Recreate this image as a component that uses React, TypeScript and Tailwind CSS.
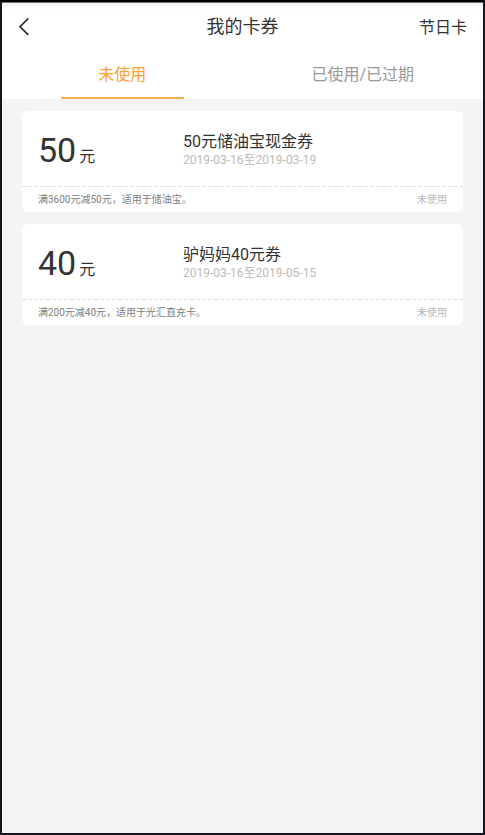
import * as React from 'react';
import { useState } from 'react';
import { clsx } from 'clsx';

interface Coupon {
  id: number;
  amount: number;
  title: string;
  period: string;
  rule: string;
  used: boolean;
}

const coupons: Coupon[] = [
  {
    id: 1,
    amount: 50,
    title: '50元储油宝现金券',
    period: '2019-03-16至2019-03-19',
    rule: '满3600元减50元，适用于储油宝。',
    used: false,
  },
  {
    id: 2,
    amount: 40,
    title: '驴妈妈40元券',
    period: '2019-03-16至2019-05-15',
    rule: '满200元减40元，适用于光汇直充卡。',
    used: false,
  },
];

interface TabButtonProps {
  label: string;
  active: boolean;
  onClick: () => void;
}

const TabButton = ({ label, active, onClick }: TabButtonProps) => (
  <button
    type="button"
    role="tab"
    aria-selected={active}
    onClick={onClick}
    className={clsx('flex flex-1 flex-col items-center', active ? 'text-[#fca130]' : 'text-[#999999]')}
  >
    <span className="flex flex-1 items-center pt-0.5 text-base">{label}</span>
    <span className={clsx('h-0.5 w-[51%]', active && 'bg-[#fcac4c]')} />
  </button>
);

const CouponCard = ({ coupon }: { coupon: Coupon }) => (
  <li className="rounded-md bg-white">
    <div className="flex h-[75px] items-center pt-0.5 pl-4">
      <div className="flex w-[145px] items-baseline gap-[3px] text-[#333333]">
        <span className="text-[34px] leading-10">{coupon.amount}</span>
        <span className="text-base">元</span>
      </div>
      <div>
        <h2 className="text-base leading-5 text-[#333333]">{coupon.title}</h2>
        <p className="text-xs leading-4 text-[#bbbbbb]">{coupon.period}</p>
      </div>
    </div>
    {/* tear line */}
    <div className="h-px bg-[repeating-linear-gradient(90deg,#dddddd_0_4px,transparent_4px_6px)]" />
    <div className="flex h-[25px] items-center justify-between px-4 text-[10px]">
      <span className="text-[#808080]">{coupon.rule}</span>
      <span className="text-[#b8b8b8]">{coupon.used ? '已使用' : '未使用'}</span>
    </div>
  </li>
);

export default function App() {
  const [showUsed, setShowUsed] = useState(false);

  return (
    <div
      lang="zh-CN"
      className="flex min-h-screen flex-col border-2 border-[#15141c] border-t-black bg-[#f4f4f4] font-[Roboto,'Noto_Sans_CJK_SC',sans-serif]"
    >
      <header className="grid h-12 grid-cols-3 items-center border-t border-[#777777] bg-linear-to-b from-[#eeeeee] to-white to-15% px-4 text-[#333333]">
        <button type="button" aria-label="返回" className="justify-self-start">
          <svg width="12" height="18" viewBox="0 0 12 18" fill="none" stroke="#222222" strokeWidth="1.6">
            <path d="M10.3 0.5 2 8.7l8.3 8.2" />
          </svg>
        </button>
        <h1 className="justify-self-center text-lg">我的卡券</h1>
        <a href="#" className="justify-self-end pt-0.5 text-base">
          节日卡
        </a>
      </header>
      <div role="tablist" className="flex h-[49px] bg-white">
        <TabButton label="未使用" active={!showUsed} onClick={() => setShowUsed(false)} />
        <TabButton label="已使用/已过期" active={showUsed} onClick={() => setShowUsed(true)} />
      </div>
      <ul className="flex flex-col gap-3 px-5 py-3">
        {coupons
          .filter((coupon) => coupon.used === showUsed)
          .map((coupon) => (
            <CouponCard key={coupon.id} coupon={coupon} />
          ))}
      </ul>
    </div>
  );
}
